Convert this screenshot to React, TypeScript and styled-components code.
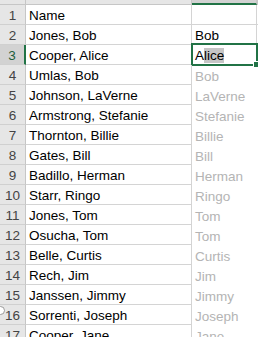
import { Fragment } from 'react'
import styled, { createGlobalStyle } from 'styled-components'

const GlobalStyle = createGlobalStyle`
  html, body {
    margin: 0;
    padding: 0;
    background: #ffffff;
    overflow: hidden;
  }
`

const excelGreen = '#217346'

const Sheet = styled.div`
  position: relative;
  display: grid;
  grid-template-columns: 26px 166px 65px 1fr;
  grid-auto-rows: 20px;
  grid-template-rows: 5px;
  width: 258px;
  height: 337px;
  overflow: hidden;
  font-family: 'Liberation Sans', Arial, sans-serif;
  font-size: 13.5px;
`

const ColHeader = styled.div<{ $selected?: boolean }>`
  background: ${(p) => (p.$selected ? '#d2d2d2' : '#e6e6e6')};
  border-right: 1px solid #c6c6c6;
  border-bottom: ${(p) => (p.$selected ? `2px solid ${excelGreen}` : '1px solid #c6c6c6')};
  box-sizing: border-box;
`

const RowHeader = styled.div<{ $selected?: boolean }>`
  display: flex;
  align-items: center;
  justify-content: center;
  box-sizing: border-box;
  padding-top: 2px;
  background: ${(p) => (p.$selected ? '#d2d2d2' : '#e6e6e6')};
  border-bottom: 1px solid #d0d0d0;
  border-right: ${(p) => (p.$selected ? `2px solid ${excelGreen}` : '1px solid #c6c6c6')};
  color: ${(p) => (p.$selected ? '#1d5e3a' : '#444444')};
  font-size: 13.5px;
`

const Cell = styled.div`
  position: relative;
  display: flex;
  align-items: center;
  box-sizing: border-box;
  padding: 2px 0 0 3px;
  border-right: 1px solid #d4d4d4;
  border-bottom: 1px solid #d4d4d4;
  color: #000000;
  white-space: nowrap;
`

// flash fill preview: gray text, no gridlines
const PreviewCell = styled.div`
  display: flex;
  align-items: center;
  box-sizing: border-box;
  padding: 2px 0 0 3px;
  background: #ffffff;
  border-left: 1px solid #ababab;
  margin-left: -1px;
  color: #b4b4b4;
  white-space: nowrap;
`

const Filler = styled.div<{ $lined?: boolean }>`
  border-bottom: ${(p) => (p.$lined ? '1px solid #d4d4d4' : 'none')};
  box-sizing: border-box;
`

const Selection = styled.div`
  position: absolute;
  top: -2px;
  left: -1px;
  right: -2px;
  bottom: -2px;
  border: 2px solid ${excelGreen};
  pointer-events: none;
`

const FillHandle = styled.div`
  position: absolute;
  right: -4px;
  bottom: -4px;
  width: 5px;
  height: 5px;
  background: ${excelGreen};
  border: 1px solid #ffffff;
`

const AutoText = styled.span`
  background: #c6c6c6;
`

const OptionsButton = styled.div`
  position: absolute;
  left: -4px;
  top: 306px;
  width: 7px;
  height: 7px;
  border: 1px solid #9a9a9a;
  border-radius: 50%;
  background: #ffffff;
`

const names = [
  'Name',
  'Jones, Bob',
  'Cooper, Alice',
  'Umlas, Bob',
  'Johnson, LaVerne',
  'Armstrong, Stefanie',
  'Thornton, Billie',
  'Gates, Bill',
  'Badillo, Herman',
  'Starr, Ringo',
  'Jones, Tom',
  'Osucha, Tom',
  'Belle, Curtis',
  'Rech, Jim',
  'Janssen, Jimmy',
  'Sorrenti, Joseph',
  'Cooper, Jane',
]

const firstName = (full: string) => full.split(', ')[1] ?? ''

function ColumnB({ row, name }: { row: number; name: string }) {
  if (row === 1) return <Cell />
  if (row === 2) return <Cell>{firstName(name)}</Cell>
  if (row === 3) {
    return (
      <Cell>
        <span>A</span>
        <AutoText>lice</AutoText>
        <Selection>
          <FillHandle />
        </Selection>
      </Cell>
    )
  }
  return <PreviewCell>{firstName(name)}</PreviewCell>
}

export default function App() {
  return (
    <>
      <GlobalStyle />
      <Sheet>
        <ColHeader />
        <ColHeader />
        <ColHeader $selected />
        <ColHeader />

        {names.map((name, i) => {
          const row = i + 1
          return (
            <Fragment key={row}>
              <RowHeader $selected={row === 3}>{row}</RowHeader>
              <Cell>{name}</Cell>
              <ColumnB row={row} name={name} />
              <Filler $lined={row <= 3} />
            </Fragment>
          )
        })}
        <OptionsButton />
      </Sheet>
    </>
  )
}
